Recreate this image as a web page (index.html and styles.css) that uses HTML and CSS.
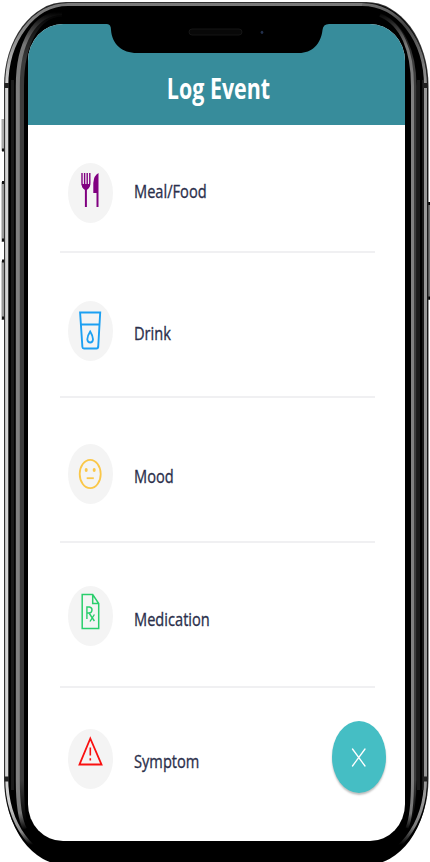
FILE: index.html
```
<!DOCTYPE html>
<html lang="en">
<head>
<meta charset="utf-8">
<title>Log Event</title>
<link rel="stylesheet" href="styles.css">
</head>
<body>
<div class="phone">
  <svg class="frame" viewBox="0 0 430 862" aria-hidden="true">
    <defs>
      <linearGradient id="rim" gradientUnits="userSpaceOnUse" x1="0" y1="0" x2="0" y2="862">
        <stop offset="0" stop-color="#777"/><stop offset=".04" stop-color="#888"/><stop offset=".1" stop-color="#d4d4d4"/><stop offset=".93" stop-color="#d4d4d4"/><stop offset=".965" stop-color="#888"/><stop offset=".98" stop-color="#000"/>
      </linearGradient>
      <linearGradient id="rimRight" gradientUnits="userSpaceOnUse" x1="0" y1="0" x2="0" y2="862">
        <stop offset="0" stop-color="#777"/><stop offset=".03" stop-color="#444"/><stop offset=".1" stop-color="#999"/><stop offset=".93" stop-color="#999"/><stop offset=".96" stop-color="#777"/><stop offset=".98" stop-color="#000"/>
      </linearGradient>
      <linearGradient id="shine" gradientUnits="userSpaceOnUse" x1="0" y1="12" x2="0" y2="838">
        <stop offset="0" stop-color="#000"/><stop offset=".04" stop-color="#777"/><stop offset=".1" stop-color="#808080"/><stop offset=".93" stop-color="#808080"/><stop offset=".97" stop-color="#777"/><stop offset=".99" stop-color="#000"/>
      </linearGradient>
      <linearGradient id="shade" gradientUnits="userSpaceOnUse" x1="0" y1="12" x2="0" y2="838">
        <stop offset="0" stop-color="#000"/><stop offset=".06" stop-color="#3c3c3c"/><stop offset=".93" stop-color="#3c3c3c"/><stop offset=".98" stop-color="#000"/>
      </linearGradient>
    </defs>
    <g>
      <rect x="1.500" y="119" width="4" height="32" fill="#aaa"/>
      <rect x="1.500" y="182" width="4" height="60" fill="#999"/>
      <rect x="1.500" y="261" width="4" height="59" fill="#999"/>
      <path d="M2 150h3M2 182.500h3M2 240h3M2 261h3M2 318h3" stroke="#111" stroke-width="3"/>
      <rect x="427" y="203" width="3" height="97" fill="#777"/>
      <path d="M427 203.500h3M427 298h3" stroke="#000" stroke-width="3"/>
    </g>
    <rect x="4" y="2" width="424.500" height="861" rx="62" ry="84" fill="#333"/>
    <rect x="5" y="3" width="422.500" height="862" rx="61" ry="83" fill="#000"/>
    <path d="M6.700 779V86C6.700 40 34 4.500 68 4.500H362" fill="none" stroke="url(#rim)" stroke-width="3.200"/>
    <path d="M6.700 778C6.700 824 34 861 68 861" fill="none" stroke="url(#rim)" stroke-width="3"/>
    <path d="M362 4.500C398 4.500 425.500 40 425.500 86V779C425.500 824 398 861 362 861" fill="none" stroke="url(#rimRight)" stroke-width="3"/>
    <path d="M423 80V790" stroke="#333" stroke-width="1"/>
    <path d="M12.500 80V790M418.500 80V790" stroke="#1b1b1b" stroke-width="3"/>
    <path d="M62 14C39 14 21.500 42 21.500 86V780C21.500 807 23 820 26 828" fill="none" stroke="url(#shade)" stroke-width="5"/>
    <path d="M62 13C35 13 17.800 42 17.800 86V780C17.800 807 20 820 25 829" fill="none" stroke="url(#shine)" stroke-width="4"/>
    <path d="M380 15C402 24 414.500 51 414.500 86V780C414.500 805 411 818 408 826" fill="none" stroke="url(#shade)" stroke-width="4"/>
    <path d="M380 15C402 24 412.500 51 412.500 86V780C412.500 807 410 821 407 828" fill="none" stroke="url(#shine)" stroke-width="3"/>
    <path d="M4.500 85.500h4.500M4.500 779h4.500M423 85.500h5M423 779h5" stroke="#222" stroke-width="5"/>
  </svg>
  <main class="screen">
    <header class="header"><h1 class="title">Log Event</h1></header>
    <ul class="events">
      <li class="event meal">
        <span class="badge"><svg viewBox="0 0 44 60">
          <path d="M14 10V20Q14 25 17.700 25.500Q21.800 25 21.800 20V10M16.600 10V22M19.200 10V22" fill="none" stroke="#800080" stroke-width="1.400"/>
          <path d="M13.600 21H22.200Q21.700 25 18.900 27V44H16.900V27Q14 25 13.600 21Z" fill="#800080"/>
          <path d="M30.500 10V44H28.500V30H25.300V20Q26 12 30.500 10Z" fill="#800080"/>
        </svg></span>
        <span class="label">Meal/Food</span>
      </li>
      <li class="event drink">
        <span class="badge"><svg viewBox="0 0 44 60">
          <path d="M12.100 11.500H32.200L30.200 46Q30 47.500 28.500 47.500H16Q14.500 47.500 14.400 46ZM12.800 23.500H31.400" fill="none" stroke="#1ca0f2" stroke-width="1.900"/>
          <path d="M22.200 30.500Q19.300 35 19.300 38.300Q19.700 41.500 22.200 41.500Q24.700 41.500 25 38.300Q25 35 22.200 30.500Z" fill="none" stroke="#1ca0f2" stroke-width="1.800"/>
        </svg></span>
        <span class="label">Drink</span>
      </li>
      <li class="event mood">
        <span class="badge"><svg viewBox="0 0 44 60">
          <ellipse cx="22.200" cy="30" rx="10.500" ry="14.200" fill="none" stroke="#fac748" stroke-width="1.800"/>
          <ellipse cx="18.200" cy="26" rx="1.500" ry="2" fill="#fac748"/><ellipse cx="26.200" cy="26" rx="1.500" ry="2" fill="#fac748"/>
          <path d="M18.700 34.200H25.800" stroke="#fac748" stroke-width="1.800"/>
        </svg></span>
        <span class="label">Mood</span>
      </li>
      <li class="event medication">
        <span class="badge"><svg viewBox="0 0 44 60">
          <path d="M14.200 8.500H24.700L30.700 17.500V42.500H14.200ZM24.700 8.500V17.500H30.700" fill="none" stroke="#2ace6c" stroke-width="1.500"/>
          <path d="M18.900 33V21H21.400Q24.100 21.500 24 24Q23.900 27 21 27H18.900M21 27L26.400 35M26.400 28.500L22 35.500" fill="none" stroke="#2ace6c" stroke-width="1.400"/>
        </svg></span>
        <span class="label">Medication</span>
      </li>
      <li class="event symptom">
        <span class="badge"><svg viewBox="0 0 44 60">
          <path d="M22.300 9.500L11.500 35.500H33.500Z" fill="none" stroke="#fa1010" stroke-width="1.800"/>
          <path d="M22.300 18.500V26.500M22.300 29.300V31.400" stroke="#fa1010" stroke-width="1.600"/>
        </svg></span>
        <span class="label">Symptom</span>
      </li>
    </ul>
  </main>
  <svg class="notch" viewBox="0 0 222 32" aria-hidden="true">
    <path d="M0 0H222V2Q216 2 215.500 8C214 22 205 31 192 31H30C15 31 5 22 4 8Q4 2 0 2Z" fill="#000"/>
    <rect x="82" y="7" width="53" height="6" rx="3" fill="#080808" stroke="#151515"/>
    <ellipse cx="155" cy="10.300" rx="1.300" ry="1.600" fill="#23304c"/>
  </svg>
  <button class="close" aria-label="Close"><svg viewBox="0 0 54 72"><path d="M20.500 28L33 45M33 28L20.500 45" stroke="#fff" stroke-width="1.300" stroke-linecap="round"/></svg></button>
</div>
</body>
</html>
```
FILE: styles.css
```
* { box-sizing: border-box; }
body { margin: 0; background: #fff; font-family: "Open Sans", "Noto Sans", sans-serif; }
.phone { position: relative; width: 430px; height: 862px; padding: 24px 25px 21px 28px; overflow: hidden; }
.frame { position: absolute; inset: 0; width: 430px; height: 862px; }
.screen { position: relative; height: 817px; background: #fff; border-radius: 35px / 37px; overflow: hidden; }
.header { height: 101px; display: flex; justify-content: center; padding: 44px 0 0 3px; background: #378c9b; }
.title { margin: 0; font-size: 28px; line-height: 40px; height: 40px; font-weight: 700; color: #fff; white-space: nowrap; transform: scaleX(.765); }
.events { list-style: none; margin: 0; padding: 0 30px 0 32px; }
.event { display: flex; align-items: flex-start; height: 145px; padding-left: 8px; border-bottom: 2px solid #f0f0f2; }
.meal { height: 128px; padding-top: 38px; }
.drink { padding-top: 48px; }
.mood { padding-top: 46px; }
.medication { padding-top: 43px; }
.symptom { padding-top: 41px; border-bottom: 0; }
.badge { flex: none; width: 45px; height: 60px; border-radius: 50%; background: #f4f4f4; }
.badge svg { display: block; width: 44px; height: 60px; }
.label { margin: 18px 0 0 21px; font-size: 19px; line-height: 28px; font-weight: 500; color: #2b2f4b; white-space: nowrap; transform: scaleX(.77); transform-origin: left; -webkit-text-stroke: .35px #2b2f4b; }
.meal .label { margin-top: 14px; }
.medication .label { margin-top: 19px; }
.close { position: absolute; left: 332px; top: 721px; width: 54px; height: 72px; padding: 0; border: 0; border-radius: 50%; background: #45bec4; box-shadow: 0 2px 2px rgba(0,0,0,.25); }
.close svg { display: block; width: 54px; height: 72px; }
.notch { position: absolute; left: 107px; top: 22px; width: 222px; height: 32px; }
```
